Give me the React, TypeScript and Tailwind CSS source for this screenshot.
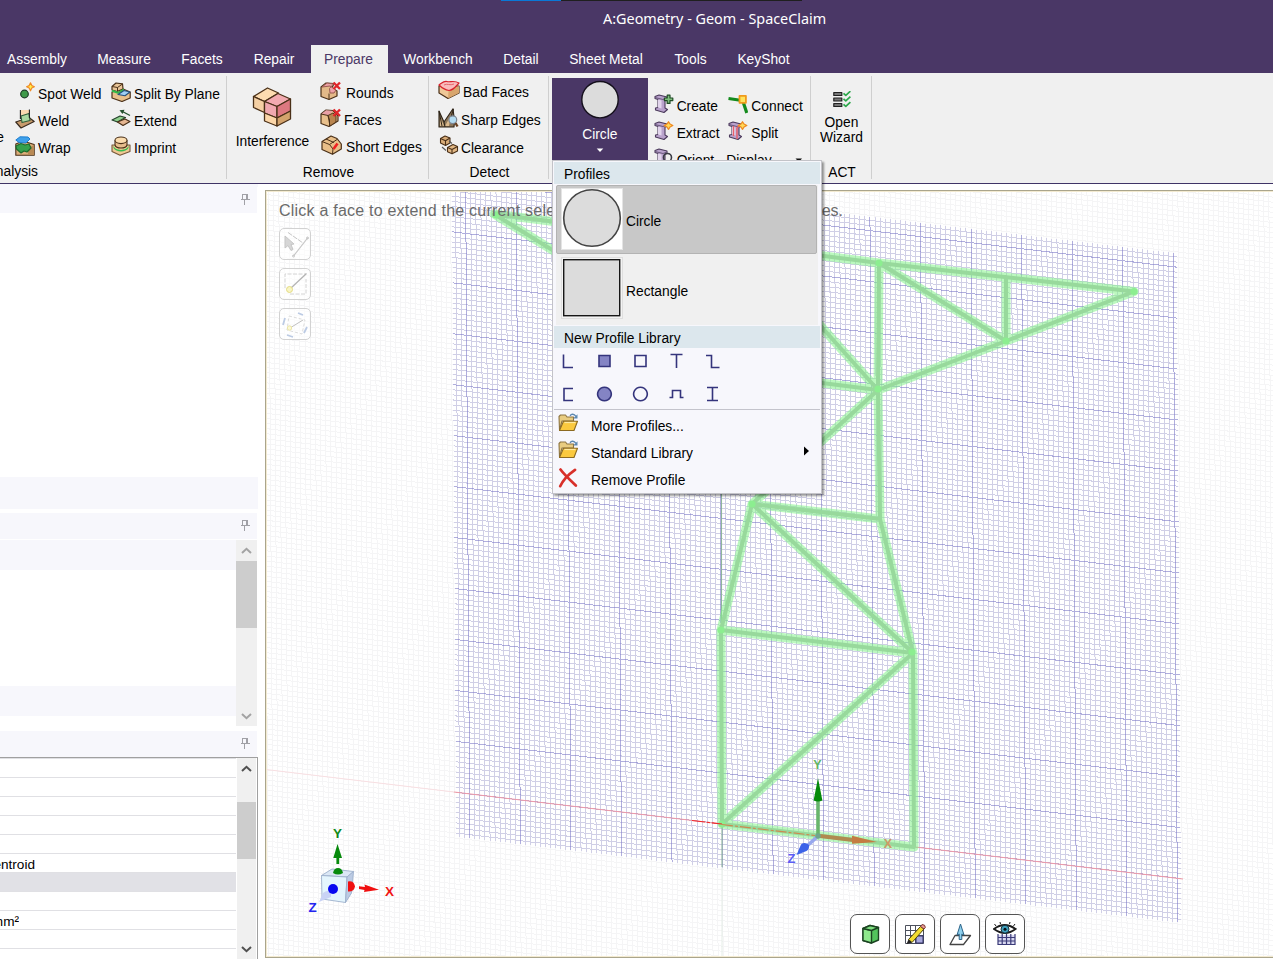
import type { ReactNode } from "react";

const INK = "#4a3018";

function Ico({ size = 20, h, className = "", children }: { size?: number; h?: number; className?: string; children: ReactNode }) {
  return (
    <svg width={size} height={h ?? size} viewBox={`0 0 ${size} ${h ?? size}`} className={`block shrink-0 ${className}`} strokeLinejoin="round">
      {children}
    </svg>
  );
}

const SpotWeldIcon = () => (
  <Ico>
    <circle cx="9.5" cy="12" r="3.8" fill="#3f9a4a" stroke="#1f3d28" strokeWidth="1.2" />
    <path d="M15.5 0.8 L16.8 3.6 19.4 4.8 16.8 6 15.5 8.8 14.2 6 11.6 4.8 14.2 3.6Z" fill="#fff04a" stroke="#f08a28" strokeWidth="1.2" />
  </Ico>
);
const WeldIcon = () => (
  <Ico>
    <path d="M0.8 13 L14 8.5 19.2 12.5 6 19Z" fill="#c79b6c" stroke="#3a2c20" strokeWidth="1.2" />
    <path d="M5.5 1 H14 V6 L6 8Z" fill="#fbd9b0" />
    <path d="M6 7 L14 4.5 15 11.5 7 13.5Z" fill="#a9d8a0" stroke="#2f5d3a" strokeWidth="1.1" />
    <path d="M5.4 1 V10 M14.4 0.6 V9" stroke="#222" strokeWidth="1.1" />
  </Ico>
);
const WrapIcon = () => (
  <Ico>
    <path d="M0.8 8 L8 5 19.2 8.5 V19.3 H0.8Z" fill="#dcae7a" stroke={INK} strokeWidth="1.1" />
    <path d="M13 12 L19 9 V19 H13Z" fill="#b98a55" />
    <path d="M1 10 L6 7.5 10 9 14 8 16 12 12 16 9 15 6 17 1.5 13Z" fill="#35a04c" stroke="#1c6b2d" strokeWidth="1.2" />
    <path d="M0.8 4 L5 0.8 13 1 15 3 11 7 4 6.5Z" fill="#3fa0ea" stroke="#1f7fd0" strokeWidth="1" />
  </Ico>
);
const SplitPlaneIcon = () => (
  <Ico>
    <path d="M1 10 V16 L11 19.5 19.2 16 V10 L12 7Z" fill="#e8c08a" stroke={INK} strokeWidth="1.2" />
    <path d="M1 4.5 L5 1 11.5 1.8 12 7 6 9.5 1 8Z" fill="#e9c597" stroke={INK} strokeWidth="1.2" />
    <path d="M1 4.5 L6.5 5.5 11.5 2 M6.5 5.5 V9" stroke={INK} fill="none" />
    <path d="M1 8.8 L7 10.8 13 7.6" stroke="#34b84a" strokeWidth="2" fill="none" />
    <path d="M7 12.5 L13 8.5 19 10 14 13.8Z" fill="#9fd0f5" stroke="#24507c" strokeWidth="1.1" />
  </Ico>
);
const ExtendIcon = () => (
  <Ico>
    <path d="M1 11 L9 7 14.5 8.5 6.5 13Z" fill="#8fcf8c" stroke="#24432c" strokeWidth="1.2" />
    <path d="M6.5 13 L14 10 19 12.5 12 16.5Z" fill="#e5b691" stroke={INK} strokeWidth="1.2" />
    <path d="M10.5 2 L19 6.5" stroke="#23502e" strokeWidth="1.4" />
    <path d="M8.5 1.2 L13.5 0.8 11.5 5Z" fill="#23502e" />
  </Ico>
);
const ImprintIcon = () => (
  <Ico>
    <path d="M1 9 V15.5 L9 19.3 19 15.5 V9Z" fill="#efc993" stroke="#76573a" strokeWidth="1.1" />
    <path d="M2.5 9 C3 15.5 17 15.5 17.5 9 L17.5 12 C15 16.5 5 16.5 2.5 12Z" fill="#37bd50" />
    <path d="M4 4.5 V9 C5 13 15 13 16 9 V4.5Z" fill="#e7bd8c" stroke={INK} strokeWidth="1.1" />
    <ellipse cx="10" cy="4.3" rx="6" ry="3.3" fill="#fbdcae" stroke={INK} strokeWidth="1.1" />
  </Ico>
);
const InterferenceIcon = () => (
  <Ico size={40}>
    <g stroke={INK} strokeWidth="1.3">
      <path d="M1.5 9.5 L15.5 1 26.5 6 12.5 14.5Z" fill="#fddcb0" />
      <path d="M1.5 9.5 L12.5 14.5 V25.5 L1.5 20.5Z" fill="#f5d0a4" />
      <path d="M12.5 14.5 L26 6.5 38.5 12 25 19.5Z" fill="#f2aab0" />
      <path d="M12.5 14.5 L25 19.5 V31 L12.5 26Z" fill="#f0a8b0" />
      <path d="M25 19.5 L38.5 12 V24 L25 31Z" fill="#dd7880" />
      <path d="M12.5 26 L25 31 V39 L12.5 34Z" fill="#fbd6a8" />
      <path d="M25 31 L38.5 24 V32 L25 39Z" fill="#d3a36c" />
    </g>
  </Ico>
);
const RedX = () => <path d="M13.5 1.5 L20 8 M20 1.5 L13.5 8" stroke="#e0262a" strokeWidth="2.4" />;
const RoundsIcon = () => (
  <Ico size={21} h={20}>
    <path d="M1 6 L6 2 14 2.5 12 7 17 10 V15 L9 18.5 1 15.5Z" fill="#e3b988" stroke={INK} strokeWidth="1.2" />
    <path d="M2 6 L7 2 13.5 3 9.5 7.5 10 12 14 12 16 9 10 5Z" fill="#eda2a8" stroke="#9b5a50" />
    <path d="M9 12.5 V18" stroke={INK} />
    <RedX />
  </Ico>
);
const FacesIcon = () => (
  <Ico size={21} h={20}>
    <path d="M1 6 L6 2 13 2.5 18 8 V13 L9 18.5 1 15.5Z" fill="#e8c08c" stroke={INK} strokeWidth="1.2" />
    <path d="M1.5 6 L6 2.3 13 3 8 7.5Z" fill="#e9a0a6" />
    <path d="M8 7.5 L13 5 16 8 V14 L10 18Z" fill="#b9854f" stroke={INK} strokeWidth="0.9" />
    <path d="M1 6 L8 7.5 9.5 12 V18" stroke={INK} fill="none" />
    <RedX />
  </Ico>
);
const ShortEdgesIcon = () => (
  <Ico size={21} h={20}>
    <path d="M1 6.5 L10 1 L16 3.5 L20.3 9 V14 L11.5 19.3 1 14.5Z" fill="#e8be88" stroke={INK} strokeWidth="1.2" />
    <path d="M1 6.5 L8.5 9.5 L12 14 L11.5 19 M5 4 L13 7.5 M8.5 9.5 L16 4.5" stroke={INK} strokeWidth="1" fill="none" />
    <path d="M12.5 14 L16.5 8.5" stroke="#ef2020" strokeWidth="2.6" />
  </Ico>
);
const BadFacesIcon = () => (
  <Ico size={22} h={20}>
    <path d="M1 6 V13 L10 18.5 21 13 V6Z" fill="#efc898" stroke={INK} strokeWidth="1.2" />
    <path d="M10.5 11 L21 6 V13 L10 18.5Z" fill="#d8a66e" />
    <path d="M1 5 C4 3 6 0.5 9 1.5 C12 2.5 16 0 21 3 C18 6 16 10 11 10.5 C8 10 5 9 1 5Z" fill="#f9bcbc" stroke="#d8222c" strokeWidth="1.2" />
    <path d="M6 5 C9 3 12 6 16 4" stroke="#e8666c" fill="none" />
  </Ico>
);
const SharpEdgesIcon = () => (
  <Ico size={21} h={20}>
    <path d="M1 19 V3 L6 14 15 0.8 16.5 13 16 19Z" fill="#8c7558" stroke="#2d2317" strokeWidth="1.1" />
    <path d="M2 18 V8 L6 18Z M7 18 L13 7 L11 18Z" fill="#d9b98d" />
    <path d="M15.5 1 L12 12 M1 3 L4 18 M6 14 L7 19" stroke="#2d2317" />
    <circle cx="14.8" cy="11.8" r="3.9" fill="#b4dcf2" stroke="#7b8490" strokeWidth="1.2" />
    <path d="M17.5 15 L19.5 18.5" stroke="#6a4020" strokeWidth="2.4" />
  </Ico>
);
const ClearanceIcon = () => (
  <Ico>
    <g stroke={INK} strokeWidth="1.1">
      <path d="M1.5 3.5 L6 1 11 3 V8 L6.5 10.5 1.5 8Z" fill="#d8ac78" />
      <path d="M1.5 3.5 L6.5 5.7 11 3 M6.5 5.7 V10" fill="none" />
      <path d="M8.5 12.5 L14 9.5 18.5 11.5 V16 L13 18.7 8.5 16.8Z" fill="#e2b885" />
      <path d="M8.5 12.5 L13 14.5 18.5 11.5 M13 14.5 V18.5" fill="none" />
      <path d="M3 12 L7 15.5 M10 6 L13 8.5" stroke="#555" />
    </g>
  </Ico>
);
const Beam = () => (
  <g>
    <path d="M1 2.5 L5 1 13 3 V5.5 L11 6 V14 L13.5 15.5 10 18.5 1.5 16 V14 L4 13.5 V5.5 L1 4.5Z" fill="#b9a2cc" stroke="#4b3a5c" strokeWidth="1.1" />
    <path d="M4 5.5 L7.5 6.5 V14.5 L4 13.5Z" fill="#e2d5ec" />
    <path d="M1 3.5 L9 5.5 13 4" stroke="#6a577c" fill="none" />
  </g>
);
const OrangeSpark = () => (
  <path d="M14.5 0.8 L16 3 18.8 4.5 16 6 14.5 8.3 13 6 10.2 4.5 13 3Z" fill="#ffd95a" stroke="#ef8a20" strokeWidth="1.3" />
);
const CreateIcon = () => (
  <Ico>
    <Beam />
    <path d="M13.2 1.2 H16 V4 H18.8 V6.6 H16 V9.4 H13.2 V6.6 H10.4 V4 H13.2Z" fill="#7fbf7d" stroke="#204d26" strokeWidth="1.2" />
  </Ico>
);
const ExtractIcon = () => (
  <Ico>
    <Beam />
    <OrangeSpark />
  </Ico>
);
const SplitIcon = () => (
  <Ico>
    <Beam />
    <path d="M5.5 15 V5 M9 18 V7 L12 4" stroke="#e8606a" strokeWidth="1.4" fill="none" />
    <OrangeSpark />
  </Ico>
);
const OrientIcon = () => (
  <Ico>
    <Beam />
    <circle cx="13.5" cy="9.5" r="4" fill="none" stroke="#3a3a44" strokeWidth="1.6" />
  </Ico>
);
const ConnectIcon = () => (
  <Ico>
    <path d="M0.5 4.5 L14 6.5" stroke="#138a1c" strokeWidth="3.2" />
    <path d="M14.5 6 L18.8 19" stroke="#138a1c" strokeWidth="3.2" />
    <rect x="11.5" y="1.8" width="6.4" height="7" fill="#ffe35c" stroke="#f09a1c" strokeWidth="1.8" />
  </Ico>
);
const WizardIcon = () => (
  <Ico size={18} h={17}>
    {[0.8, 6.3, 11.8].map((y) => (
      <g key={y}>
        <rect x="0.8" y={y + 0.7} width="8" height="3" fill="#777" stroke="#222" strokeWidth="1.2" />
        <path d={`M10.5 ${y + 1.5} L12.8 ${y + 3.6} 17.4 ${y - 0.6}`} stroke="#2ba84a" strokeWidth="1.7" fill="none" />
      </g>
    ))}
  </Ico>
);
const FolderIcon = () => (
  <Ico size={21} h={20} className="-mt-[5px]">
    <path d="M1 3.5 L2.5 2 H7.5 L9 4 H15.5 V8 H4 L1.5 17Z" fill="#e9cc80" stroke="#8d7440" strokeWidth="1.1" />
    <path d="M1.5 17.5 L5.5 8.2 H19.5 L16 17.5Z" fill="#fbc93e" stroke="#8c6a20" strokeWidth="1.1" />
    <path d="M6.5 9.5 H17.5" stroke="#ffe9a0" strokeWidth="1.2" />
    <path d="M12 2.8 C13.5 0.5 16 0.8 18 3.4" stroke="#5d88b0" strokeWidth="1.3" fill="none" />
    <path d="M19.5 1.2 V5.6 H15.2Z" fill="#5d88b0" />
  </Ico>
);
const RemoveIcon = () => (
  <Ico size={21} h={20} className="-mt-[4px]">
    <path d="M2.5 1.5 C5 5 12 12 17.8 17.5 M17 1.8 C11 6 5 12 2.2 18.2" stroke="#d8302a" strokeWidth="2.7" fill="none" strokeLinecap="round" />
  </Ico>
);

function Item({ icon, label, gap = "gap-1", drop = "pt-[7px]" }: { icon: ReactNode; label: string; gap?: string; drop?: string }) {
  return (
    <div className={`flex h-[27px] items-center ${gap}`}>
      {icon}
      <span className={`whitespace-nowrap leading-4 ${drop}`}>{label}</span>
    </div>
  );
}

const TABS: [string, string][] = [
  ["Assembly", "w-[90px] -ml-[8px]"],
  ["Measure", "w-[84px]"],
  ["Facets", "w-[72px]"],
  ["Repair", "w-[72px]"],
  ["Prepare", "w-[77px]"],
  ["Workbench", "w-[100px]"],
  ["Detail", "w-[66px]"],
  ["Sheet Metal", "w-[104px]"],
  ["Tools", "w-[65px]"],
  ["KeyShot", "w-[81px]"],
];

function Header() {
  return (
    <header className="flex h-[73px] shrink-0 flex-col bg-[#4a3766] text-white">
      <div className="flex h-px shrink-0 pl-[501px]">
        <div className="w-[60px] bg-[#0a78d7]" />
        <div className="w-[241px] bg-[#1f1f1f]" />
      </div>
      <div className="flex h-[44px] shrink-0 pl-[603px]">
        <span className="whitespace-nowrap pt-[7px] font-['Noto_Sans','Open_Sans',sans-serif] text-[14.4px] leading-[22px]">
          A:Geometry - Geom - SpaceClaim
        </span>
      </div>
      <nav className="flex h-[28px]">
        {TABS.map(([name, w]) => (
          <div
            key={name}
            className={`flex shrink-0 items-center justify-center whitespace-nowrap pt-[2px] ${w} ${name === "Prepare" ? "ml-px bg-[#f0f0f0] pr-[2px] text-[#4a3766]" : ""}`}
          >
            {name}
          </div>
        ))}
      </nav>
    </header>
  );
}

const group = "flex h-[103px] shrink-0 flex-col border-r border-[#cfcfcf]";
const caption = "h-[16px] whitespace-nowrap pl-[2px] pt-[2px] text-center leading-4";

function Ribbon() {
  return (
    <div className="flex h-[111px] shrink-0 border-b border-[#3f3466] bg-[#f0f0f0] pt-[3px]">
      <section className={`${group} w-[227px]`}>
        <div className="flex h-[85px]">
          <div className="flex w-[4px] justify-end overflow-hidden pt-[54px] leading-4">Surface</div>
          <div className="ml-[11px] w-[96px] pt-[2px]">
            <Item icon={<SpotWeldIcon />} label="Spot Weld" gap="gap-[3px]" />
            <Item icon={<WeldIcon />} label="Weld" gap="gap-[3px]" />
            <Item icon={<WrapIcon />} label="Wrap" gap="gap-[3px]" />
          </div>
          <div className="pt-[2px]">
            <Item icon={<SplitPlaneIcon />} label="Split By Plane" gap="gap-[3px]" />
            <Item icon={<ExtendIcon />} label="Extend" gap="gap-[3px]" />
            <Item icon={<ImprintIcon />} label="Imprint" gap="gap-[3px]" />
          </div>
        </div>
        <div className="mt-[3px] flex h-[18px] w-[38px] justify-end overflow-hidden pt-[2px] leading-4">Analysis</div>
      </section>

      <section className={`${group} w-[202px]`}>
        <div className="flex h-[88px]">
          <div className="flex w-[93px] flex-col items-center pr-[2px] pt-[11px]">
            <div className="-ml-[2px]">
              <InterferenceIcon />
            </div>
            <span className="mt-[7px] leading-4">Interference</span>
          </div>
          <div className="pt-px">
            <Item icon={<RoundsIcon />} label="Rounds" gap="gap-[5px]" />
            <Item icon={<FacesIcon />} label="Faces" gap="gap-[3px]" />
            <div className="pl-px">
              <Item icon={<ShortEdgesIcon />} label="Short Edges" />
            </div>
          </div>
        </div>
        <div className={caption}>Remove</div>
      </section>

      <section className={`${group} w-[120px]`}>
        <div className="flex h-[88px] flex-col pl-[9px]">
          <Item icon={<BadFacesIcon />} label="Bad Faces" gap="gap-[3px]" />
          <div className="pt-px">
            <Item icon={<SharpEdgesIcon />} label="Sharp Edges" gap="gap-[2px]" />
          </div>
          <div className="pl-px">
            <Item icon={<ClearanceIcon />} label="Clearance" gap="gap-[2px]" drop="pt-[9px]" />
          </div>
        </div>
        <div className={caption}>Detect</div>
      </section>

      <section className={`${group} w-[262px] overflow-hidden`}>
        <div className="flex">
          <div className="ml-[3px] mt-[2px] flex h-[101px] w-[96px] flex-col items-center bg-[#4a3766] text-white">
            <svg width="40" height="40" className="mt-[2px]">
              <circle cx="20" cy="19.7" r="18.2" fill="#dcdcdc" stroke="#15101c" strokeWidth="1.4" />
            </svg>
            <span className="mt-[7px] leading-4">Circle</span>
            <svg width="8" height="5" className="mt-[5px]">
              <path d="M0.7 0.5 H7.3 L4 4Z" fill="#fff" />
            </svg>
          </div>
          <div className="ml-[6px] w-[75px] pt-[14px]">
            <Item icon={<CreateIcon />} label="Create" gap="gap-[3px]" />
            <Item icon={<ExtractIcon />} label="Extract" gap="gap-[3px]" />
            <Item icon={<OrientIcon />} label="Orient" gap="gap-[3px]" />
          </div>
          <div className="w-[82px] pt-[14px]">
            <Item icon={<ConnectIcon />} label="Connect" gap="gap-[3px]" />
            <Item icon={<SplitIcon />} label="Split" gap="gap-[3px]" />
            <div className="-ml-[2px] flex h-[27px] w-[77px] items-center justify-between pt-[6px] leading-4">
              Display
              <svg width="8" height="5">
                <path d="M0.5 0.5 H7 L3.8 4Z" fill="#111" />
              </svg>
            </div>
          </div>
        </div>
      </section>

      <section className={`${group} w-[61px] items-center`}>
        <div className="flex h-[88px] flex-col items-center pl-px pt-[15px]">
          <WizardIcon />
          <div className="mt-[7px] text-center leading-[15px]">
            Open
            <br />
            Wizard
          </div>
        </div>
        <div className={caption}>ACT</div>
      </section>
    </div>
  );
}

function PanelTitle() {
  return (
    <div className="flex h-[26px] w-[257px] shrink-0 items-center justify-end bg-[#f7f7fc] pb-[2px] pr-[7px]">
      <svg width="10" height="12" fill="none" stroke="#a0a0a6" strokeWidth="1" shapeRendering="crispEdges">
        <path d="M2.5 6.5 V1.5 H7.5 V6.5 M6.5 1.5 V6.5 M0.5 6.5 H9.5 M4.5 6.5 V11.5" />
      </svg>
    </div>
  );
}

function Chevron({ up, dark }: { up?: boolean; dark?: boolean }) {
  return (
    <svg width="11" height="8" fill="none" stroke={dark ? "#505050" : "#a3a3a3"} strokeWidth="2">
      <path d={up ? "M1 6 L5.5 1.8 L10 6" : "M1 2 L5.5 6.2 L10 2"} />
    </svg>
  );
}

const ROWS = ["", "", "", "", "", "Centroid", "selected", "", "mm²", "", ""];

function SidePanel() {
  return (
    <aside className="flex w-[258px] shrink-0 flex-col overflow-hidden bg-white">
      <div className="h-[3px] shrink-0 bg-[#f7f7fc]" />
      <PanelTitle />
      <div className="h-[264px] shrink-0" />
      <div className="h-[32px] shrink-0 bg-[#f7f7fc]" />
      <div className="h-[4px] shrink-0" />
      <PanelTitle />
      <div className="mt-px flex h-[186px] w-[257px] shrink-0">
        <div className="flex w-[236px] flex-col">
          <div className="h-[30px] bg-[#f7f7fc]" />
          <div className="h-[116px]" />
          <div className="h-[30px] bg-[#f7f7fc]" />
        </div>
        <div className="flex w-[21px] flex-col items-center bg-[#f0f0f0]">
          <div className="flex h-[21px] items-center">
            <Chevron up />
          </div>
          <div className="h-[67px] w-full bg-[#cdcdcd]" />
          <div className="h-[78px]" />
          <div className="flex h-[20px] items-center">
            <Chevron />
          </div>
        </div>
      </div>
      <div className="h-[5px] shrink-0" />
      <PanelTitle />
      <div className="flex h-[202px] shrink-0 border-r border-t border-[#a0a0a0]">
        <div className="w-[236px] overflow-hidden border-t border-[#e0e0e4] text-[13.6px]">
          {ROWS.map((r, i) => (
            <div
              key={i}
              className={`flex h-[19px] border-b border-[#e0e0e4] ${r === "selected" ? "bg-[#e1e1e6]" : ""}`}
            >
              <div
                className={`flex shrink-0 justify-end overflow-hidden whitespace-nowrap pt-px leading-[19px] ${r === "mm²" ? "w-[19px]" : "w-[35px]"}`}
              >
                {r === "selected" ? "" : r}
              </div>
            </div>
          ))}
        </div>
        <div className="ml-px flex w-[19px] flex-col items-center bg-[#f0f0f0]">
          <div className="flex h-[44px] pt-[7px]">
            <Chevron up dark />
          </div>
          <div className="h-[57px] w-full bg-[#cdcdcd]" />
          <div className="h-[86px]" />
          <Chevron dark />
        </div>
      </div>
    </aside>
  );
}

/* Sketch plane: affine basis, u along the red axis and v along the green one. */
const px = (u: number, v: number) => (722.3 + 5.055 * u - 0.0326 * v).toFixed(2);
const py = (u: number, v: number) => (824 + 0.6015 * u - 5.095 * v).toFixed(2);

function gridPath(u0: number, u1: number, v0: number, v1: number, step: number, over: number, skipTens = false) {
  const parts: string[] = [];
  for (let u = Math.ceil(u0 / step) * step; u <= u1; u += step)
    if (!skipTens || u % 10 !== 0)
      parts.push(`M${px(u, v0 - over)} ${py(u, v0 - over)}L${px(u, v1 + over)} ${py(u, v1 + over)}`);
  for (let v = Math.ceil(v0 / step) * step; v <= v1; v += step)
    if (!skipTens || v % 10 !== 0)
      parts.push(`M${px(u0 - over, v)} ${py(u0 - over, v)}L${px(u1 + over, v)} ${py(u1 + over, v)}`);
  return parts.join("");
}
const FAINT = gridPath(-95, 112, -45, 140, 1, 0);
const MINOR = gridPath(-52, 90, -8, 122, 1, 0.7, true);
const MAJOR = gridPath(-52, 90, -8, 122, 10, 0.7);

const TRUSS: [number, number, number, number][] = [
  [494, 214, 879, 263], [879, 263, 1134, 291.5], [1134, 291.5, 1006, 341], [1006, 341, 878, 390],
  [879, 263, 878, 390], [879, 263, 1006, 341], [1006, 277, 1006, 341], [494, 214, 622, 293],
  [622, 293, 750, 374], [750, 374, 878, 390], [750, 247, 878, 390], [750, 247, 750, 374],
  [878, 390, 752, 504], [878, 390, 880, 519], [752, 504, 880, 519], [752, 504, 721, 630],
  [880, 519, 913, 653], [752, 504, 913, 653], [721, 630, 913, 653], [721, 630, 722, 824],
  [913, 653, 914, 847], [722, 824, 913, 653], [722, 824, 914, 847],
];
const TRUSS_D = TRUSS.map(([a, b, c, d]) => `M${a} ${b}L${c} ${d}`).join("");
const NODES: [number, number][] = [
  [496, 215], [879, 263], [1134, 291.5], [1006, 341], [878, 389], [752, 504], [912, 652], [722, 824], [721, 630],
];

function Scene() {
  return (
    <svg width="1007" height="766" viewBox="266 191 1007 766" className="absolute left-0 top-0" fill="none">
      <path d={FAINT} stroke="#f5f5f6" shapeRendering="crispEdges" />
      <path d={MINOR} stroke="#7470c0" strokeOpacity="0.29" shapeRendering="crispEdges" />
      <path d={MAJOR} stroke="#6c68c4" strokeOpacity="0.5" shapeRendering="crispEdges" />
      <path d="M266 769.5 L454 792" stroke="#f8dfe2" />
      <path d="M454 792 L1183 879" stroke="#f09aa6" strokeWidth="1.1" />
      <path d="M721.5 494 V632 M722 815 V867" stroke="#8fb59c" strokeWidth="1.1" />
      <path d="M722 867 V957" stroke="#e4ece6" />

      <path d={TRUSS_D} stroke="#84f288" strokeOpacity="0.55" strokeWidth="9" strokeLinecap="round" />
      <path d={TRUSS_D} stroke="#98d99c" strokeWidth="4" strokeLinecap="round" />
      {NODES.map(([x, y]) => (
        <circle key={`${x}-${y}`} cx={x} cy={y} r="3.6" fill="#8cee90" />
      ))}
      <path d="M692 820.5 L722 824" stroke="#f02828" strokeWidth="1.2" strokeDasharray="13 2 3 2" />
      <path d="M722 824.5 L815 835.5" stroke="#cc8a50" strokeWidth="1.2" strokeDasharray="11 2 3 2" />

      <path d="M818 836 V800" stroke="#68b56c" strokeWidth="3.6" />
      <path d="M818 778 L813.6 800.5 Q818 802.5 822.4 800.5Z" fill="#058a0a" />
      <path d="M820 836 L853 840" stroke="#b08a50" strokeWidth="4" />
      <path d="M852 835.8 L877 842 L852 843.8Z" fill="#c47c42" />
      <path d="M817 837 L807 846" stroke="#98a8ee" strokeWidth="3.6" />
      <path d="M796.5 855 L801 844.5 Q805 841.5 809 845 Q809.5 849 806.5 851Z" fill="#3c62e8" />
      <circle cx="818" cy="836" r="2.8" fill="#6fa68c" />
      <g fontFamily="Liberation Sans, Arial, sans-serif" fontWeight="700" fontSize="13.5" textAnchor="middle">
        <text x="817.5" y="769" fill="#5fb562" fontSize="12.5">Y</text>
        <text x="888" y="848" fill="#cf9a66" fontSize="12.5">X</text>
        <text x="791.5" y="863" fill="#5c5cf4" fontSize="13">Z</text>
        <text x="337.5" y="838" fill="#128a18">Y</text>
        <text x="389.5" y="895.7" fill="#f01414">X</text>
        <text x="312.5" y="912" fill="#2424f0">Z</text>
      </g>

      <g stroke="#9db0cc" strokeWidth="0.9">
        <path d="M321.5 875.5 L332 869 L353.5 871.5 L347 877Z" fill="#dbe7f5" />
        <path d="M321.5 875.5 L347 877 L345.5 902.5 L322 899Z" fill="#e4f5fd" />
        <path d="M347 877 L353.5 871.5 L351.5 893 L345.5 902.5Z" fill="#bccbe4" />
      </g>
      <path d="M319 902 L323 893 Q328 889 331 893 V897 L326 899Z" fill="#c9d3f5" />
      <path d="M333 873 Q334 868 338 868 Q342 868 343 873 Q338 876 333 873Z" fill="#078a0c" />
      <path d="M337.5 844 L333.3 858 H342Z M336.4 858 H339.2 V864 H336.4Z" fill="#078a0c" />
      <path d="M348 881.5 Q354 880.5 355 886.5 Q354 892 348 891.5Z" fill="#f01010" />
      <path d="M359 886.3 L365 887 L364.5 884.5 L379 889.8 L364 892 L364.5 890 L359 889Z" fill="#f01010" />
      <circle cx="333" cy="889" r="5" fill="#0808f0" />
    </svg>
  );
}

const ghostBtn = "flex size-[32px] items-center justify-center rounded-[5px] border border-[#d2d2d2] bg-white/60";

function GhostTools() {
  return (
    <div className="flex flex-col gap-[8px]">
      <div className={ghostBtn}>
        <svg width="28" height="28" fill="none" stroke="#c6c6c6">
          <path d="M12.5 26 L27 7.5" strokeWidth="1.2" />
          <path d="M7 2.5 L22 13" strokeDasharray="5 1" />
          <circle cx="12.5" cy="26" r="1" />
          <circle cx="26.5" cy="8" r="1" />
          <path d="M4 6 V18 L7 15.5 L10 20.5 L12 19.5 L10 14.5 L13 14Z" fill="#d6d6d6" />
        </svg>
      </div>
      <div className={ghostBtn}>
        <svg width="28" height="28" fill="none">
          <path d="M4 18 V4 H25 M9 24 H25 V9" stroke="#d4d4d4" strokeDasharray="4 1.5" />
          <path d="M10 18 L25.5 3.5" stroke="#b4b4b4" strokeWidth="1.3" />
          <circle cx="8.5" cy="19.5" r="3" fill="#f8f5c4" stroke="#e4dc84" />
        </svg>
      </div>
      <div className={ghostBtn}>
        <svg width="28" height="28" fill="none">
          <path d="M8 6 L24 10 L21 24 L6 20Z" stroke="#dcdcdc" strokeDasharray="3 2" />
          <path d="M9 18 L22 10" stroke="#c0c0c0" />
          <circle cx="8.5" cy="18" r="2.2" fill="#fbf8d8" stroke="#ece6a6" />
          <path d="M2 15 L4 8 M17 3 L22 5 M26 17 L23 23 M12 27 L6 25" stroke="#bccbe4" strokeWidth="1.8" />
        </svg>
      </div>
    </div>
  );
}

const toolBtn = "flex size-[40px] items-center justify-center rounded-[7px] border border-[#555] bg-white";

function BottomTools() {
  return (
    <div className="absolute left-[584px] top-[723px] flex gap-[5px]">
      <div className={toolBtn}>
        <svg width="22" height="22" strokeLinejoin="round" stroke="#1c4422" strokeWidth="1.4" className="ml-[3px] mt-[2px]">
          <path d="M2 4.5 L9 1.5 L17.5 3.5 V16 L10.5 19 L2 16.5Z" fill="#52c45c" />
          <path d="M2 4.5 L10.5 6.5 V19 L2 16.5Z" fill="#8eea8c" />
          <path d="M2 4.5 L9 1.5 L17.5 3.5 L10.5 6.5Z" fill="#7fe080" />
        </svg>
      </div>
      <div className={toolBtn}>
        <svg width="24" height="24" fill="none">
          <path d="M2.5 3.5 H20.5 V21.5 H2.5Z M7.5 3 V21 M12.5 3 V21 M2 8.5 H20 M2 13.5 H20" stroke="#4c505c" />
          <rect x="13" y="14" width="7" height="7" fill="#a8a8dc" stroke="#333366" />
          <path d="M5.5 17.5 L17.5 4.5 L21 7 L9 20.5Z" fill="#f2dc30" stroke="#4c430c" />
          <path d="M17.5 4.5 L19 2.5 Q22.5 2.5 22.3 5.5 L21 7Z" fill="#e99a94" stroke="#7a3a34" />
          <path d="M5.5 17.5 L3.5 22 L9 20.5Z" fill="#222" />
        </svg>
      </div>
      <div className={toolBtn}>
        <svg width="24" height="24" strokeLinejoin="round">
          <path d="M2 22.5 L7 13.5 H22.5 L15.5 22.5Z" fill="#fff" stroke="#444" strokeWidth="1.3" />
          <path d="M12.5 2 L16 13 L13.8 12 V17.5 H11.2 V12 L9 13Z" fill="#8ed0ee" stroke="#2d6488" />
        </svg>
      </div>
      <div className={toolBtn}>
        <svg width="24" height="24" fill="none">
          <rect x="5" y="13" width="17" height="9.5" fill="#d8d8f0" />
          <path d="M5 12 V22.5 H22 V12 M9.2 12 V22 M13.5 12 V22 M17.8 12 V22 M5 15.5 H22 M5 19 H22" stroke="#3a3a78" strokeWidth="1.2" />
          <path d="M1 7 Q11.5 -1 22.5 7 Q12 15 1 7Z" fill="#fff" stroke="#1c1c1c" strokeWidth="2" />
          <circle cx="12" cy="7.2" r="4" fill="#3fa0bd" stroke="#15303c" />
          <circle cx="12" cy="7.2" r="1.5" fill="#081018" />
          <path d="M3 4 L1.5 2 M7.5 2 L7 0 M16.5 2 L17 0 M20.5 4 L22 2" stroke="#1c1c1c" />
        </svg>
      </div>
    </div>
  );
}

function Viewport() {
  return (
    <main className="relative ml-[7px] mt-[6px] flex h-[768px] min-w-0 flex-1 flex-col overflow-hidden border-y border-l border-[#aaa58c] bg-white">
      <Scene />
      <div className="relative flex flex-col pl-[13px] pt-[10px]">
        <div className="flex w-[564px] justify-between whitespace-nowrap text-[16px] leading-[20px] text-[#6a6a6a]">
          <span className="w-[300px] overflow-hidden tracking-[0.22px]">Click a face to extend the current selection</span>
          <span>es.</span>
        </div>
        <div className="pt-[7px]">
          <GhostTools />
        </div>
      </div>
      <BottomTools />
      <div className="pointer-events-none absolute inset-0 border-y border-l border-[#f3ead0]" />
    </main>
  );
}

const SHAPES: { d: string; fill?: boolean }[] = [
  { d: "M3.5 2.5 V15.5 H13" },
  { d: "M3 3.5 H14 V14.5 H3Z", fill: true },
  { d: "M3 3.5 H14 V14.5 H3Z" },
  { d: "M2.5 2.5 H14.5 M8.5 2.5 V16" },
  { d: "M2 3.5 H7.5 V15.5 H15.5" },
  { d: "M13 3.5 H4 V15.5 H13" },
  { d: "M8.5 2.2 A6.8 6.8 0 1 1 8.4 2.2Z", fill: true },
  { d: "M8.5 2.2 A6.8 6.8 0 1 1 8.4 2.2Z" },
  { d: "M1.5 12.5 H4.5 V5.5 H12.5 V12.5 H15.5" },
  { d: "M3 2.5 H14 M8.5 2.5 V15.5 M3 15.5 H14" },
];

function ProfileMenu() {
  return (
    <div className="absolute left-[552px] top-[160px] flex h-[334px] w-[270px] flex-col border border-[#c3c3c8] bg-[#f7f7fc] p-px shadow-[2px_2px_2px_rgba(0,0,0,0.4)]">
      <div className="h-[22px] shrink-0 bg-[#dce7ed] pl-[10px] pt-[5px] leading-4">Profiles</div>
      <div className="mx-[2px] mt-px flex h-[140px] shrink-0 flex-col bg-[#f0f0f0]">
        <div className="flex h-[69px] w-[261px] items-center rounded-[2px] border border-[#b3b3b3] bg-[#c8c8c8] pl-[4px]">
          <svg width="62" height="62" className="-mt-px">
            <rect x="0.5" y="0.5" width="61" height="61" fill="#fff" stroke="#e4e4e4" />
            <circle cx="31" cy="30" r="28.3" fill="#dcdcdc" stroke="#444" strokeWidth="1.6" />
          </svg>
          <span className="pl-[3px] pt-[4px] leading-4">Circle</span>
        </div>
        <div className="flex h-[70px] items-center pl-[5px]">
          <svg width="62" height="62" className="-mt-[2px]">
            <rect x="0.5" y="0.5" width="61" height="61" fill="#f3f3f3" stroke="#dedede" />
            <rect x="2.7" y="2.7" width="56" height="56" fill="#dcdcdc" stroke="#161616" strokeWidth="1.4" />
          </svg>
          <span className="pl-[3px] pt-[5px] leading-4">Rectangle</span>
        </div>
      </div>
      <div className="mt-px h-[22px] shrink-0 bg-[#dce7ed] pl-[10px] pt-[5px] leading-4">New Profile Library</div>
      <div className="grid h-[61px] w-[186px] shrink-0 grid-cols-[repeat(5,36px)] grid-rows-[33px_28px] pl-[6px] pt-px">
        {SHAPES.map((s, i) => (
          <svg key={i} width="17" height="18" className="mt-[3px]" stroke="#34347c" strokeWidth="1.6" fill={s.fill ? "#8484c4" : "none"}>
            <path d={s.d} />
          </svg>
        ))}
      </div>
      <div className="h-px shrink-0 bg-[#c4c4cc]" />
      <div className="flex flex-col pl-[4px] pt-[2px]">
        <Item icon={<FolderIcon />} label="More Profiles..." gap="gap-[12px]" drop="pt-[3px]" />
        <div className="flex items-center justify-between pr-[10px]">
          <Item icon={<FolderIcon />} label="Standard Library" gap="gap-[12px]" drop="pt-[3px]" />
          <svg width="7" height="10" className="-mt-[3px]">
            <path d="M1 0.5 L6 5 L1 9.5Z" fill="#000" />
          </svg>
        </div>
        <Item icon={<RemoveIcon />} label="Remove Profile" gap="gap-[12px]" drop="pt-[3px]" />
      </div>
    </div>
  );
}

export default function App() {
  return (
    <div className="relative flex h-[959px] w-[1273px] flex-col overflow-hidden bg-white font-['Liberation_Sans',Arial,sans-serif] text-[13.8px] text-black">
      <Header />
      <Ribbon />
      <div className="flex min-h-0 flex-1">
        <SidePanel />
        <Viewport />
      </div>
      <ProfileMenu />
    </div>
  );
}
